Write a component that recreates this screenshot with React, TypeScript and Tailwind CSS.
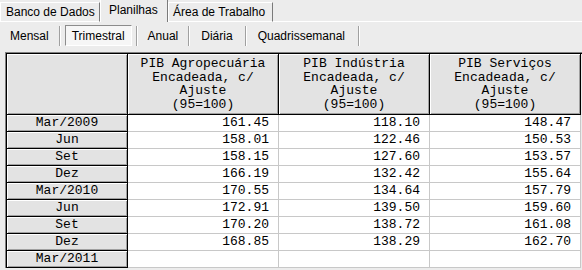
import React from "react";

const rows: [string, string, string, string][] = [
  ["Mar/2009", "161.45", "118.10", "148.47"],
  ["Jun", "158.01", "122.46", "150.53"],
  ["Set", "158.15", "127.60", "153.57"],
  ["Dez", "166.19", "132.42", "155.64"],
  ["Mar/2010", "170.55", "134.64", "157.79"],
  ["Jun", "172.91", "139.50", "159.60"],
  ["Set", "170.20", "138.72", "161.08"],
  ["Dez", "168.85", "138.29", "162.70"],
  ["Mar/2011", "", "", ""],
];

const headers = [
  ["PIB Agropecuária", "Encadeada, c/", "Ajuste", "(95=100)"],
  ["PIB Indústria", "Encadeada, c/", "Ajuste", "(95=100)"],
  ["PIB Serviços", "Encadeada, c/", "Ajuste", "(95=100)"],
];

function Sep() {
  return <div className="w-[2px] h-[20px] border-l border-l-[#a0a0a0] border-r border-r-white" />;
}

export default function App() {
  return (
    <div className="w-[582px] h-[270px] bg-[#ececec] overflow-hidden font-['Liberation_Sans',Arial,sans-serif] text-[12px] text-black">
      {/* top tabs */}
      <div className="flex items-end h-[22px]">
        <div className="w-[100px] h-[20px] flex items-center pl-[5px] border-t border-l border-b border-white border-r border-r-[#7a7a7a]">
          Banco de Dados
        </div>
        <div className="w-[68px] h-[22px] flex items-center pl-[8px] pb-[3px] border-l border-white border-r border-r-[#7a7a7a]">
          Planilhas
        </div>
        <div className="w-[105px] h-[20px] flex items-center pl-[4px] border-t border-l border-b border-white border-r border-r-[#7a7a7a]">
          Área de Trabalho
        </div>
        <div className="flex-1 h-[20px] border-b border-white" />
      </div>

      {/* sub tabs */}
      <div className="flex items-center h-[27px] pl-[10px]">
        <span>Mensal</span>
        <div className="ml-[10px]"><Sep /></div>
        <div className="ml-[4px] h-[21px] flex items-center px-[6px] bg-[#f6f6f6] border-t border-l border-[#8c8c8c] border-b border-r border-b-white border-r-white">
          Trimestral
        </div>
        <div className="ml-[4px]"><Sep /></div>
        <span className="ml-[10px]">Anual</span>
        <div className="ml-[10px]"><Sep /></div>
        <span className="ml-[11px]">Diária</span>
        <div className="ml-[12px]"><Sep /></div>
        <span className="ml-[11px]">Quadrissemanal</span>
        <div className="ml-[13px]"><Sep /></div>
      </div>

      {/* grid */}
      <div className="ml-[5px] mt-[3px] w-[577px] border-t border-l border-[#808080]">
        <div className="border-t border-l border-black font-['Liberation_Mono',monospace] text-[13px]">
          <div className="grid grid-cols-[121px_151px_151px_151px]">
            <div className="h-[61px] bg-[#e3e3e3] border-r border-b border-black shadow-[inset_1px_1px_0_#fff,inset_-1px_-1px_0_#a0a0a0]" />
            {headers.map((h, i) => (
              <div
                key={i}
                className="h-[61px] bg-[#e3e3e3] border-r border-b border-black shadow-[inset_1px_1px_0_#fff,inset_-1px_-1px_0_#a0a0a0] flex flex-col items-center justify-start leading-[13.5px] pt-[3px]"
              >
                {h.map((l, j) => (
                  <div key={j} className="whitespace-pre">{l}</div>
                ))}
              </div>
            ))}
            {rows.map((r, i) => (
              <React.Fragment key={i}>
                <div className="h-[17px] bg-[#e3e3e3] border-r border-b border-black shadow-[inset_1px_1px_0_#fff,inset_-1px_-1px_0_#a0a0a0] flex items-center justify-center">
                  {r[0]}
                </div>
                {[1, 2, 3].map((c) => (
                  <div
                    key={c}
                    className="h-[17px] bg-white border-r border-b border-[#c8c8c8] flex items-center justify-end pr-[9px]"
                  >
                    {r[c]}
                  </div>
                ))}
              </React.Fragment>
            ))}
          </div>
        </div>
      </div>
    </div>
  );
}
